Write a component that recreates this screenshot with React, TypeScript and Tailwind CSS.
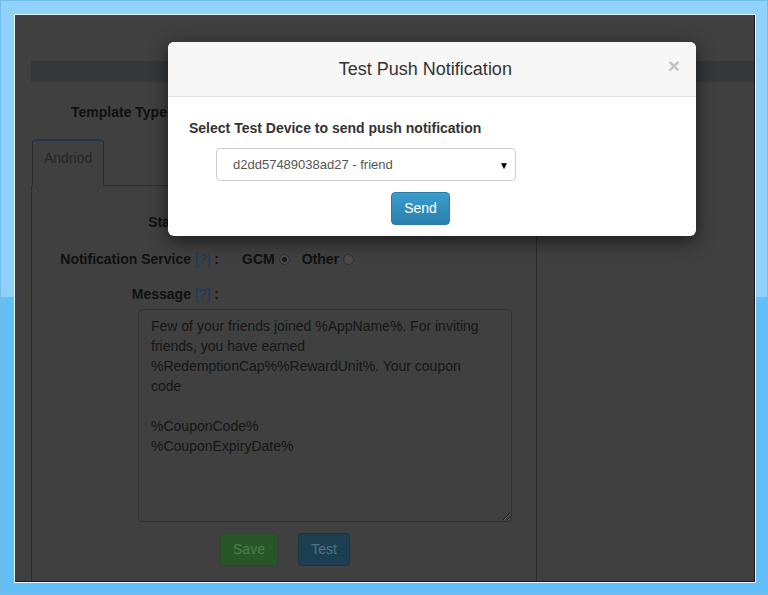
import { useState } from 'react'

const FONT = "font-['Liberation_Sans',Arial,sans-serif]"

function FormRow({ label, children }: { label: string; children?: React.ReactNode }) {
  return (
    <div className="flex items-center h-[18px]">
      <div className="w-[187px] text-right text-[14px] font-bold text-[#222] whitespace-nowrap">
        {label} <span className="text-[#3a78b8] font-normal">[?]</span> :
      </div>
      <div className="ml-[23px] flex items-center">{children}</div>
    </div>
  )
}

function Radio({ checked }: { checked?: boolean }) {
  return (
    <span className="ml-[4px] inline-flex h-[11px] w-[11px] items-center justify-center rounded-full border border-[#5c5c5c] bg-[#949494]">
      {checked && <span className="h-[5px] w-[5px] rounded-full bg-[#343434]" />}
    </span>
  )
}

function Page() {
  const message =
    'Few of your friends joined %AppName%. For inviting\nfriends, you have earned\n%RedemptionCap%%RewardUnit%. Your coupon\ncode\n\n%CouponCode%\n%CouponExpiryDate%'

  return (
    <div className="h-full bg-[#808080] pt-[46px] pl-[16px]">
      <div className="h-[21px] bg-[#667076]" />

      <div className="mt-[21px] ml-[40px] h-[18px] leading-[18px] text-[14px] font-bold text-[#222]">Template Type:</div>

      <div className="mt-[18px] w-[506px]">
        <div className="flex items-end">
          <div className="ml-[1px] h-[47px] w-[72px] rounded-t-[4px] border border-b-0 border-[#585858] border-t-2 border-t-[#447094] pl-[11px] pt-[7px] text-[14px] leading-[20px] text-[#4c4c4c]">
            Andriod
          </div>
          <div className="flex-1 border-b border-[#585858]" />
        </div>
        <div className="h-[420px] border-l border-r border-[#585858] pt-[27px]">
          <FormRow label="Status" />
          <div className="mt-[19px]">
            <FormRow label="Notification Service">
              <span className="text-[14px] font-bold text-[#222]">GCM</span>
              <Radio checked />
              <span className="ml-[12px] text-[14px] font-bold text-[#222]">Other</span>
              <Radio />
            </FormRow>
          </div>
          <div className="mt-[17px]">
            <FormRow label="Message" />
          </div>
          <textarea
            readOnly
            wrap="off"
            value={message}
            className="mt-[6px] ml-[106px] block h-[213px] w-[374px] overflow-hidden rounded-[4px] border border-[#646464] bg-[#808080] px-[12px] py-[6px] text-[14px] leading-[20px] text-[#2e2e2e] outline-none"
          />
          <div className="mt-[11px] ml-[188px] flex gap-[20px]">
            <button className="h-[33px] w-[58px] rounded-[4px] border border-[#469446] bg-[#52ac52] text-[14px] text-[#9ef09e]">Save</button>
            <button className="h-[33px] w-[52px] rounded-[4px] border border-[#306c8c] bg-[#367ca2] text-[14px] text-[#9ce6ff]">Test</button>
          </div>
        </div>
      </div>
    </div>
  )
}

function Modal() {
  const [device, setDevice] = useState('d2dd57489038ad27')

  return (
    <div className="absolute left-[153px] top-[27px] w-[528px] h-[194px] rounded-[6px] bg-white shadow-[0_5px_18px_rgba(0,0,0,0.6)]">
      <div className="flex h-[55px] items-center rounded-t-[6px] border-b border-[#e2e2e2] bg-[#f7f7f7] pl-[15px] pr-[16px]">
        <h4 className="flex-1 text-center text-[18px] text-[#333]">Test Push Notification</h4>
        <button className="-mt-[8px] text-[21px] font-bold leading-none text-[#c4c4c4]">×</button>
      </div>
      <div className="pt-[22px] pl-[21px]">
        <div className="h-[18px] text-[14px] font-bold leading-[18px] text-[#333]">Select Test Device to send push notification</div>
        <div className="relative mt-[11px] ml-[27px] h-[33px] w-[300px]">
          <select
            value={device}
            onChange={(e) => setDevice(e.target.value)}
            className="h-full w-full appearance-none rounded-[4px] border border-[#cfcfcf] bg-white pl-[16px] text-[13px] text-[#555] outline-none"
          >
            <option value="d2dd57489038ad27">d2dd57489038ad27 - friend</option>
          </select>
          <span className="pointer-events-none absolute right-[7px] top-[10px] text-[10px] text-black">▼</span>
        </div>
        <button className="mt-[11px] ml-[202px] h-[33px] w-[59px] rounded-[4px] border border-[#2a7aa4] bg-gradient-to-b from-[#3a9dcc] to-[#2a80ad] text-[14px] text-white">
          Send
        </button>
      </div>
    </div>
  )
}

export default function App() {
  return (
    <div className={`${FONT} h-[595px] w-[768px] overflow-hidden border border-[#71bdea] bg-[linear-gradient(to_bottom,#8fd1fa_0%,#8fd1fa_50%,#62bff7_50%,#62bff7_100%)] pt-[14px] pl-[14px] pr-[12px] pb-[12px]`}>
      <div className="relative h-full overflow-hidden border-r border-b border-[#181818] outline outline-1 outline-[#e6f5ff]">
        <Page />
        <div className="absolute inset-0 bg-black/50" />
        <Modal />
      </div>
    </div>
  )
}
